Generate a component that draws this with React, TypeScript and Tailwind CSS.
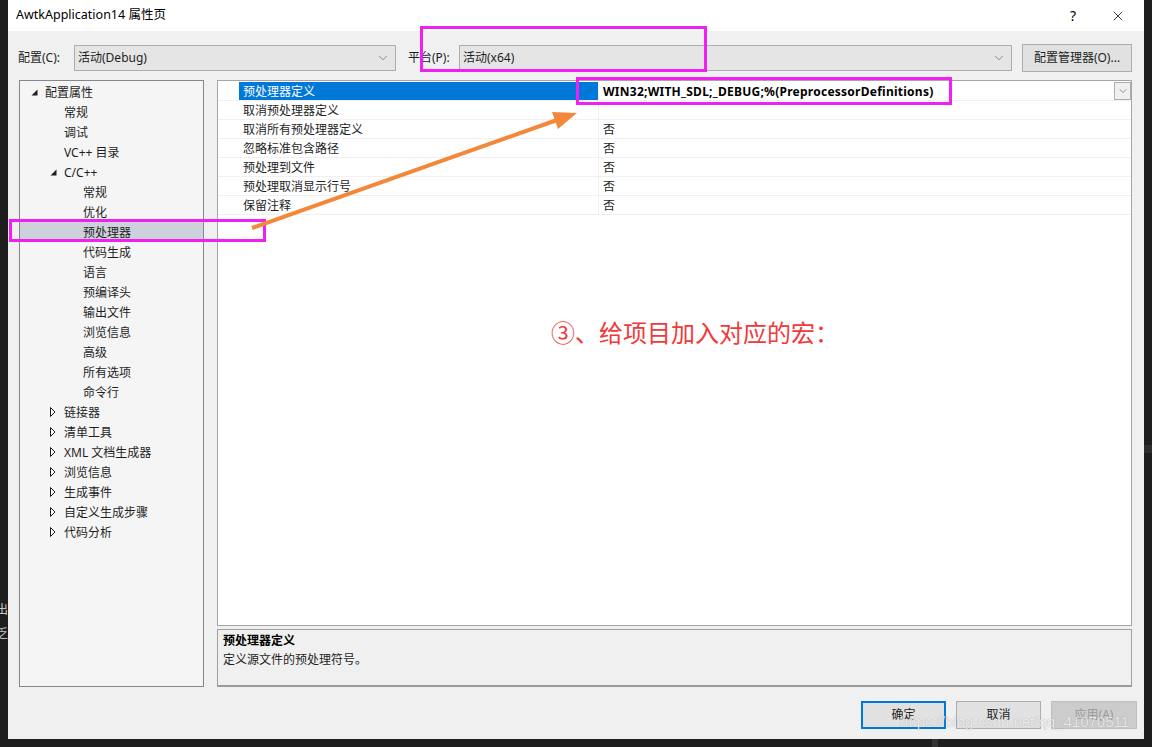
import { ChevronDown, X } from "lucide-react";

const font = { fontFamily: '"Noto Sans", "Noto Sans CJK SC", sans-serif' };

type TreeItem = { label: string; level: number; toggle?: "open" | "closed"; selected?: boolean };

const tree: TreeItem[] = [
  { label: "配置属性", level: 0, toggle: "open" },
  { label: "常规", level: 1 },
  { label: "调试", level: 1 },
  { label: "VC++ 目录", level: 1 },
  { label: "C/C++", level: 1, toggle: "open" },
  { label: "常规", level: 2 },
  { label: "优化", level: 2 },
  { label: "预处理器", level: 2, selected: true },
  { label: "代码生成", level: 2 },
  { label: "语言", level: 2 },
  { label: "预编译头", level: 2 },
  { label: "输出文件", level: 2 },
  { label: "浏览信息", level: 2 },
  { label: "高级", level: 2 },
  { label: "所有选项", level: 2 },
  { label: "命令行", level: 2 },
  { label: "链接器", level: 1, toggle: "closed" },
  { label: "清单工具", level: 1, toggle: "closed" },
  { label: "XML 文档生成器", level: 1, toggle: "closed" },
  { label: "浏览信息", level: 1, toggle: "closed" },
  { label: "生成事件", level: 1, toggle: "closed" },
  { label: "自定义生成步骤", level: 1, toggle: "closed" },
  { label: "代码分析", level: 1, toggle: "closed" },
];

const indent = ["pl-[11px]", "pl-[30px]", "pl-[49px]"];

const rows = [
  { name: "取消预处理器定义", value: "" },
  { name: "取消所有预处理器定义", value: "否" },
  { name: "忽略标准包含路径", value: "否" },
  { name: "预处理到文件", value: "否" },
  { name: "预处理取消显示行号", value: "否" },
  { name: "保留注释", value: "否" },
];

function Toggle({ kind }: { kind?: "open" | "closed" }) {
  if (kind === "open")
    return (
      <svg width="7" height="7" viewBox="0 0 7 7">
        <polygon points="6.5,0.5 6.5,6.5 0.5,6.5" fill="#1e1e1e" />
      </svg>
    );
  if (kind === "closed")
    return (
      <svg width="6" height="10" viewBox="0 0 6 10">
        <polygon points="0.5,0.5 5,5 0.5,9.5" fill="none" stroke="#1e1e1e" strokeWidth="1" />
      </svg>
    );
  return null;
}

function Select({ text, className }: { text: string; className: string }) {
  return (
    <div className={`h-[26px] bg-[#e5e5e5] border border-[#adadad] flex items-center pl-[3px] pr-[5px] ${className}`}>
      <span className="flex-1">{text}</span>
      <ChevronDown size={14} strokeWidth={1} color="#444" />
    </div>
  );
}

export default function App() {
  return (
    <div className="relative w-[1152px] h-[747px] bg-[#1e1e1e] overflow-hidden text-[12px] text-[#1e1e1e]" style={font}>
      <div className="ml-[8px] w-[1136px] h-[739px] bg-[#f0f0f0] flex flex-col">
        {/* title bar */}
        <div className="h-[31px] bg-white flex items-center pl-[8px] pr-[18px]">
          <span className="flex-1 text-[12.5px] text-black">AwtkApplication14 属性页</span>
          <span className="text-[14px] text-black mr-[34px]">?</span>
          <X size={16} strokeWidth={1.2} color="#111" />
        </div>

        {/* config row */}
        <div className="flex items-center h-[28px] mt-[13px] pl-[10px]">
          <span className="w-[56px]">配置(C):</span>
          <Select text="活动(Debug)" className="w-[322px]" />
          <span className="w-[51px] ml-[12px]">平台(P):</span>
          <Select text="活动(x64)" className="w-[553px]" />
          <div className="ml-[10px] w-[110px] h-[28px] bg-[#e1e1e1] border border-[#adadad] flex items-center justify-center">
            配置管理器(O)...
          </div>
        </div>

        {/* main */}
        <div className="flex mt-[8px] h-[607px] pl-[11px]">
          <div className="w-[185px] h-full border border-[#828790] bg-[#f5f5f5] pt-[1px]">
            {tree.map((t, i) => (
              <div
                key={i}
                className={`h-[20px] flex items-center ${indent[t.level]} ${t.selected ? "bg-[#cdd1db]" : ""}`}
              >
                <span className="w-[14px] flex items-center">
                  <Toggle kind={t.toggle} />
                </span>
                <span className="leading-[20px] pt-[1px]">{t.label}</span>
              </div>
            ))}
          </div>

          <div className="ml-[13px] w-[915px] flex flex-col">
            <div className="h-[546px] border border-[#a5a5a5] bg-white pt-[1px]">
              <div className="flex h-[19px] border-b border-[#f0f0f0] leading-[20px]">
                <div className="w-[21px]" />
                <div className="w-[360px] bg-[#0078d7] text-white pl-[4px] border-r border-[#f0f0f0]">
                  预处理器定义
                </div>
                <div className="flex-1 flex pl-[4px] font-bold text-black">
                  <span className="flex-1 tracking-[0.25px]">WIN32;WITH_SDL;_DEBUG;%(PreprocessorDefinitions)</span>
                  <div className="w-[17px] h-[18px] border border-[#adadad] bg-[#f0f0f0] flex items-center justify-center">
                    <ChevronDown size={12} strokeWidth={1} color="#333" />
                  </div>
                </div>
              </div>
              {rows.map((r, i) => (
                <div key={i} className="flex h-[19px] border-b border-[#f0f0f0] leading-[20px]">
                  <div className="w-[21px]" />
                  <div className="w-[360px] pl-[4px] border-r border-[#f0f0f0]">{r.name}</div>
                  <div className="flex-1 pl-[4px]">{r.value}</div>
                </div>
              ))}
            </div>
            <div className="mt-[3px] h-[58px] border border-[#a0a0a0] border-b-2 border-b-[#9a9a9a] px-[5px] pt-[1px] leading-[19px]">
              <div className="font-bold text-black">预处理器定义</div>
              <div>定义源文件的预处理符号。</div>
            </div>
          </div>
        </div>

        {/* buttons */}
        <div className="flex justify-end gap-[10px] mt-[14px] pr-[7px]">
          <div className="w-[85px] h-[28px] bg-[#e1e1e1] border-2 border-[#0078d7] flex items-center justify-center">确定</div>
          <div className="w-[85px] h-[28px] bg-[#e1e1e1] border border-[#adadad] flex items-center justify-center">取消</div>
          <div className="w-[86px] h-[28px] bg-[#cccccc] border border-[#bfbfbf] flex items-center justify-center text-[#9a9a9a]">应用(A)</div>
        </div>
      </div>

      {/* background IDE bits */}
      <div className="absolute left-[-4px] top-[600px] text-[12px] text-[#c8c8c8] leading-[20px]">出</div>
      <div className="absolute left-[-4px] top-[624px] text-[12px] text-[#c8c8c8] leading-[20px]">乏</div>
      <div className="absolute left-[1144px] top-[445px] w-[8px] h-[8px] bg-[#2d2d30]" />
      <div className="absolute left-[932px] top-[739px] w-[6px] h-[8px] bg-[#333337]" />

      {/* annotations */}
      <div className="absolute left-[420px] top-[26px] w-[287px] h-[46px] border-[3px] border-[#f21ff2]" />
      <div className="absolute left-[576px] top-[77px] w-[376px] h-[28px] border-[3px] border-[#f21ff2]" />
      <div className="absolute left-[9px] top-[219px] w-[257px] h-[23px] border-[3px] border-[#f21ff2]" />
      <svg className="absolute left-0 top-0" width="1152" height="747">
        <line x1="252" y1="228" x2="557" y2="120" stroke="#f4883a" strokeWidth="4" />
        <polygon points="577,113 558,129 552,112" fill="#f4883a" />
      </svg>
      <div className="absolute left-[551px] top-[317px] text-[24px] leading-[32px] text-[#f03a3a]">③、给项目加入对应的宏：</div>
      <div
        className="absolute left-[900px] top-[712px] text-[15px] leading-[20px] text-white/80"
        style={{ fontFamily: '"Liberation Sans", sans-serif', textShadow: "0 0 1px rgba(0,0,0,0.35)" }}
      >
        https://blog.csdn.net/qq_41070511
      </div>
    </div>
  );
}
